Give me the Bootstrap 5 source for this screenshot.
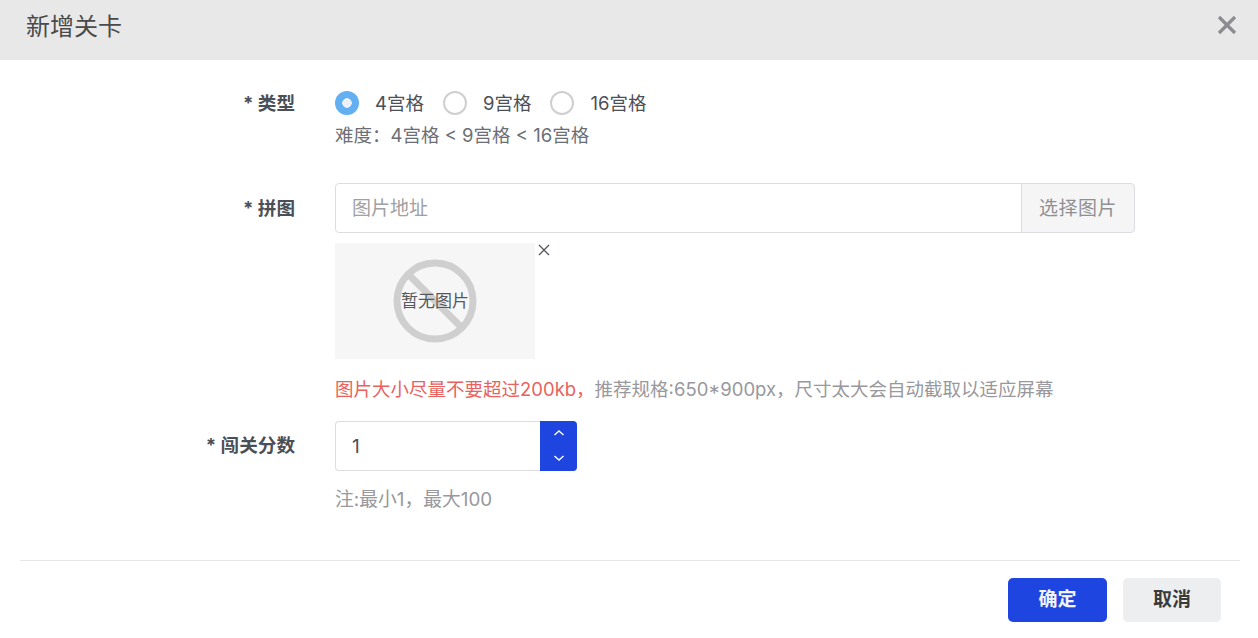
<!DOCTYPE html>
<html lang="zh-CN">
<head>
    <meta charset="UTF-8" />
    <title>新增关卡</title>
    <link href="https://cdn.jsdelivr.net/npm/bootstrap@5.3.0/dist/css/bootstrap.min.css" rel="stylesheet">
    <style>
        body {
            margin: 0;
            height: 638px;
            overflow: hidden;
            background: #fff;
            font-family: Inter, "Noto Sans CJK SC", sans-serif;
            font-size: 18.5px;
            color: #4b4f56;
        }
        .dlg-head {
            height: 60px;
            background: #e8e8e8;
            padding: 0 20px 6px 26px;
        }
        .dlg-title {
            font-size: 24px;
            font-weight: 400;
            color: #4a4a4a;
            margin: 0;
        }
        .dlg-close {
            background: none;
            border: 0;
            padding: 0;
            width: 22px;
            height: 22px;
            line-height: 0;
            margin-bottom: 4px;
        }
        .dlg-body {
            height: 500px;
            padding-top: 30px;
        }
        .field-row {
            display: flex;
        }
        .row-pic { margin-top: 35px; }
        .row-num { margin-top: 19px; }
        .field-label {
            width: 295px;
            flex: none;
            text-align: right;
            font-weight: 700;
            font-size: 18.6px;
            color: #4b4f56;
            line-height: 26px;
            margin: 0;
        }
        .label-pad { padding-top: 11px; }
        .field-main {
            margin-left: 40px;
            width: 800px;
        }
        .pick-wrap { gap: 19px; }
        .pick-radio {
            display: flex;
            align-items: center;
            height: 26px;
            gap: 16px;
            margin: 0;
            padding-top: 1px;
        }
        .pick-radio input {
            appearance: none;
            width: 24px;
            height: 24px;
            border-radius: 50%;
            border: 2px solid #cfcfcf;
            background: #fff;
            margin: 0 0 1px;
        }
        .pick-radio input:checked {
            border: 0;
            background: radial-gradient(circle, #edf0f5 0 4.5px, #62aff2 5px);
        }
        .hint-dark { color: #6b6f75; line-height: 26px; margin-top: 6px; }
        .hint-grey { color: #98989d; line-height: 26px; }
        .hint-pic { margin-top: 17px; }
        .hint-num { margin-top: 16px; font-size: 18.8px; }
        .hint-red { color: #e9625e; }
        .pic-input {
            height: 50px;
            font-size: 19px;
            padding: 1px 16px 0;
            border-color: #dcdde2;
            color: #4b4f56;
            border-radius: 4px 0 0 4px;
        }
        .pic-input::placeholder { color: #a0a0a3; }
        .pic-btn {
            width: 114px;
            justify-content: center;
            font-size: 19px;
            letter-spacing: .5px;
            padding-top: 8px;
            background: #f5f5f6;
            color: #8f9094;
            border-color: #dcdde2;
            border-radius: 0 4px 4px 0;
        }
        .pic-row { margin-top: 10px; }
        .pic-box {
            width: 200px;
            height: 116px;
            background: #f6f6f6;
            font-size: 17px;
            color: #55585c;
        }
        .pic-box svg { position: absolute; left: 58px; top: 16px; }
        .pic-box span { position: relative; top: 1px; }
        .pic-del {
            background: none;
            border: 0;
            padding: 0;
            width: 12px;
            height: 12px;
            margin-left: 3px;
            margin-top: 1px;
            line-height: 0;
        }
        .num-group { width: 242px; height: 50px; }
        .num-group .pic-input { border-right: 0; }
        .num-arrows {
            width: 37px;
            background: #1f45e0;
            border-radius: 0 4px 4px 0;
        }
        .num-arrows button {
            flex: 1;
            background: none;
            border: 0;
            padding: 0 0 2px;
            line-height: 0;
        }
        .dlg-foot {
            margin: 0 18px 0 20px;
            height: 78px;
            border-top: 1px solid #e6e6e6;
            padding-top: 17px;
            padding-right: 19px;
        }
        .foot-btn {
            width: 99px;
            height: 44px;
            padding: 0;
            font-size: 19px;
            font-weight: 700;
            border: 0;
            border-radius: 5px;
        }
        .foot-ok { background: #1f45e0; color: #f1f3fb; }
        .foot-no { background: #eceef0; color: #3a3a3a; width: 98px; }
    </style>
</head>
<body>
    <div class="dlg-head d-flex justify-content-between align-items-center">
        <h5 class="dlg-title">新增关卡</h5>
        <button class="dlg-close" type="button" aria-label="关闭">
            <svg width="20" height="20" viewBox="0 0 20 20"><path d="M2 2L18 18M18 2L2 18" stroke="#8b8c90" stroke-width="3.2" fill="none"/></svg>
        </button>
    </div>

    <div class="dlg-body">
        <div class="field-row">
            <label class="field-label">* 类型</label>
            <div class="field-main">
                <div class="d-flex pick-wrap">
                    <label class="pick-radio"><input type="radio" name="kind" checked>4宫格</label>
                    <label class="pick-radio"><input type="radio" name="kind">9宫格</label>
                    <label class="pick-radio"><input type="radio" name="kind">16宫格</label>
                </div>
                <div class="hint-dark">难度：4宫格 &lt; 9宫格 &lt; 16宫格</div>
            </div>
        </div>

        <div class="field-row row-pic">
            <label class="field-label pt-2 mt-1">* 拼图</label>
            <div class="field-main">
                <div class="input-group">
                    <input class="form-control pic-input" placeholder="图片地址">
                    <span class="input-group-text pic-btn">选择图片</span>
                </div>
                <div class="d-flex align-items-start pic-row">
                    <div class="pic-box position-relative d-flex align-items-center justify-content-center">
                        <svg width="84" height="84" viewBox="0 0 84 84"><circle cx="42" cy="42" r="38" fill="none" stroke="#cfcfcf" stroke-width="7"/><path d="M15 15L69 69" stroke="#cfcfcf" stroke-width="7"/></svg>
                        <span>暂无图片</span>
                    </div>
                    <button class="pic-del" type="button" aria-label="删除">
                        <svg width="12" height="12" viewBox="0 0 12 12"><path d="M1 1L11 11M11 1L1 11" stroke="#55585c" stroke-width="1.4" fill="none"/></svg>
                    </button>
                </div>
                <div class="hint-grey hint-pic"><span class="hint-red">图片大小尽量不要超过200kb，</span>推荐规格:650*900px，尺寸太大会自动截取以适应屏幕</div>
            </div>
        </div>

        <div class="field-row row-num">
            <label class="field-label label-pad">* 闯关分数</label>
            <div class="field-main">
                <div class="d-flex num-group">
                    <input class="form-control pic-input" value="1">
                    <div class="d-flex flex-column num-arrows flex-shrink-0">
                        <button type="button" aria-label="增加"><svg width="12" height="8" viewBox="0 0 12 8"><path d="M1.5 6L6 2L10.5 6" stroke="#fff" stroke-width="1.4" fill="none"/></svg></button>
                        <button type="button" aria-label="减少"><svg width="12" height="8" viewBox="0 0 12 8"><path d="M1.5 2L6 6L10.5 2" stroke="#fff" stroke-width="1.4" fill="none"/></svg></button>
                    </div>
                </div>
                <div class="hint-grey hint-num">注:最小1，最大100</div>
            </div>
        </div>
    </div>

    <div class="dlg-foot d-flex justify-content-end gap-3">
        <button class="btn foot-btn foot-ok" type="button">确定</button>
        <button class="btn foot-btn foot-no" type="button">取消</button>
    </div>
    <script src="https://cdn.jsdelivr.net/npm/bootstrap@5.3.0/dist/js/bootstrap.bundle.min.js"></script>
</body>
</html>
